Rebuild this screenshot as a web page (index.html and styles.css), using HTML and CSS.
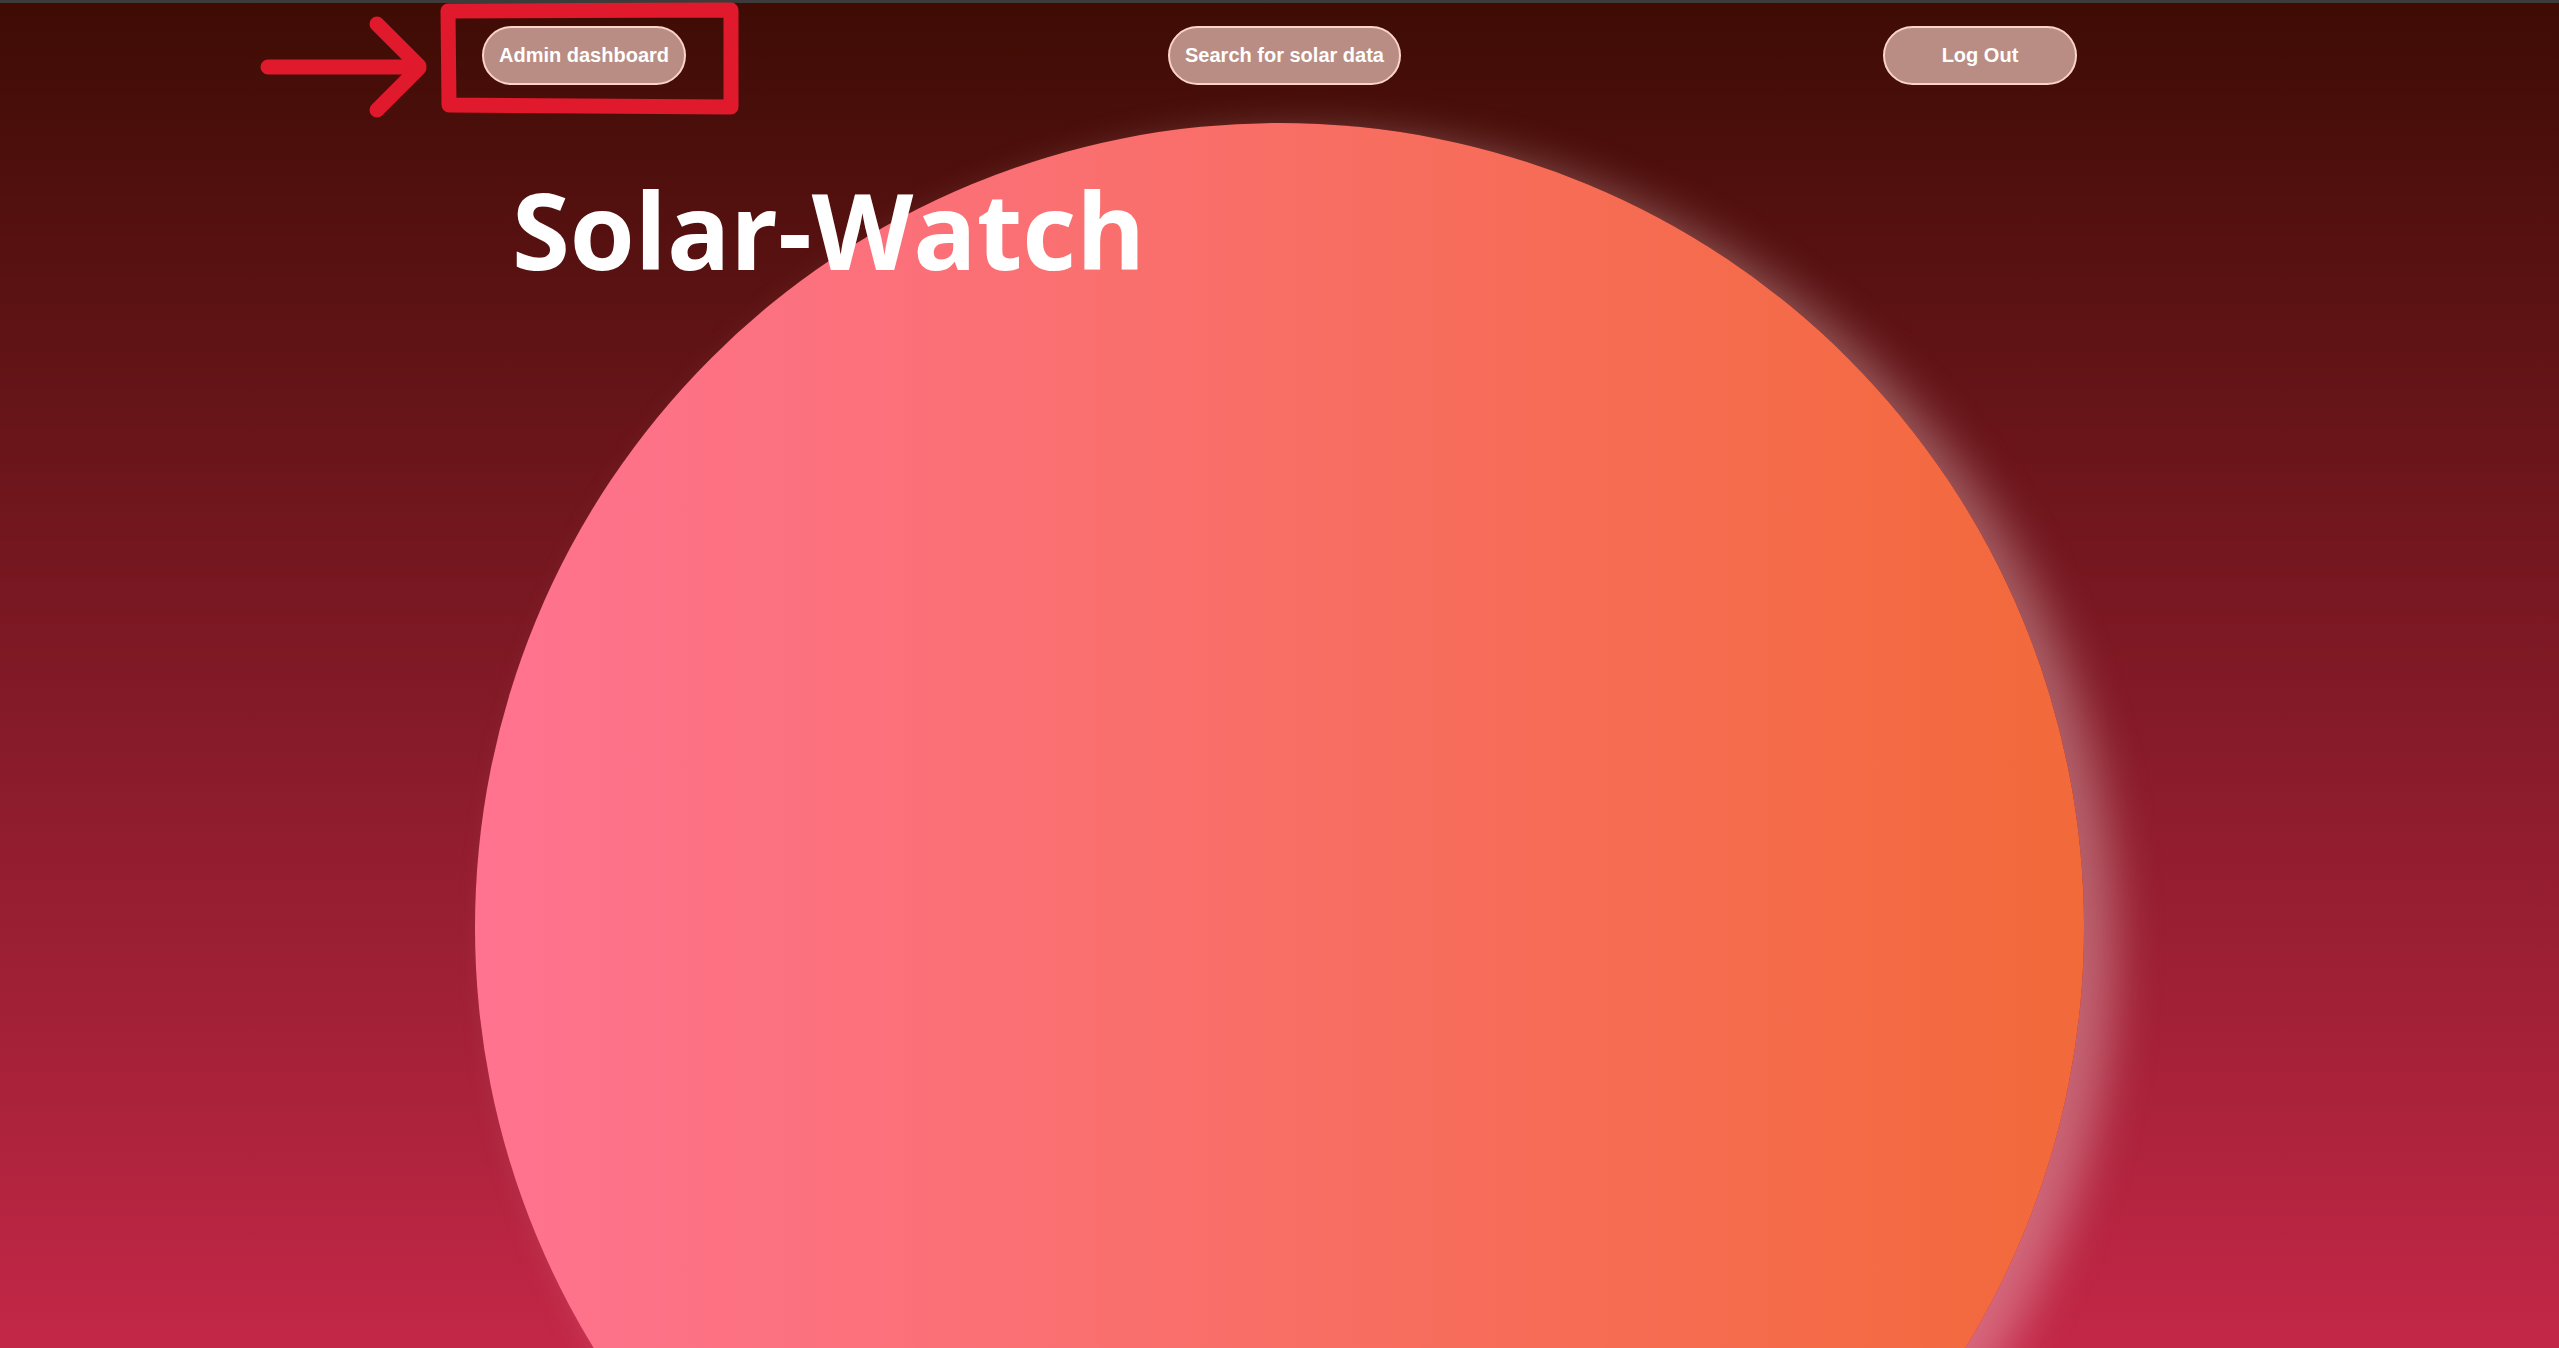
FILE: index.html
```html
<!DOCTYPE html>
<html lang="en">
<head>
<meta charset="utf-8">
<title>Solar-Watch</title>
<link rel="stylesheet" href="styles.css">
</head>
<body>
<div class="page">
  <div class="topline"></div>
  <nav class="nav">
    <button class="nav-btn" type="button">Admin dashboard</button>
    <button class="nav-btn" type="button">Search for solar data</button>
    <button class="nav-btn nav-btn--min" type="button">Log Out</button>
  </nav>
  <main class="hero">
    <div class="sun"></div>
    <h1 class="title">Solar-Watch</h1>
  </main>
  <svg class="annotation" width="760" height="130" viewBox="0 0 760 130" aria-hidden="true">
    <path class="mark" d="M448 11 L731 10 L731 107 L449 105 Z" />
    <path class="mark" d="M268 67 L417 67 M377 24 L419 66 M419 68 L377 110" />
  </svg>
</div>
</body>
</html>
```
FILE: styles.css
```css
html, body {
  margin: 0;
  padding: 0;
  height: 100%;
}

.page {
  position: relative;
  height: 100vh;
  overflow: hidden;
  background: linear-gradient(to bottom, #3e0c04 0%, #c32747 100%);
}

.topline {
  height: 3px;
  background: #3d3b3a;
}

.nav {
  display: flex;
  justify-content: space-evenly;
  align-items: flex-start;
  padding-top: 23px;
}

.nav-btn {
  box-sizing: border-box;
  font-family: "Liberation Sans", Arial, sans-serif;
  font-weight: 700;
  font-size: 20px;
  line-height: 23px;
  color: #ffffff;
  background: #b98d83;
  border: 2px solid #fbd4c7;
  border-radius: 30px;
  padding: 16px 15px;
  margin: 0;
  cursor: pointer;
}

.nav-btn--min {
  min-width: 194px;
}

.hero {
  position: relative;
  margin-top: 38px;
}

.sun {
  width: 1609px;
  height: 1609px;
  margin: 0 auto;
  border-radius: 50%;
  background: linear-gradient(to right, #ff7390 0%, #f2693a 100%);
  box-shadow: 32px 14px 45px rgba(255, 228, 228, 0.35);
}

.title {
  position: absolute;
  top: 35px;
  left: 512px;
  margin: 0;
  font-family: "Open Sans", "Noto Sans", sans-serif;
  font-weight: 700;
  font-size: 105px;
  line-height: normal;
  color: #ffffff;
}

.annotation {
  position: absolute;
  top: 0;
  left: 0;
}

.mark {
  fill: none;
  stroke: #e1192d;
  stroke-width: 15;
  stroke-linecap: round;
  stroke-linejoin: round;
}
```
